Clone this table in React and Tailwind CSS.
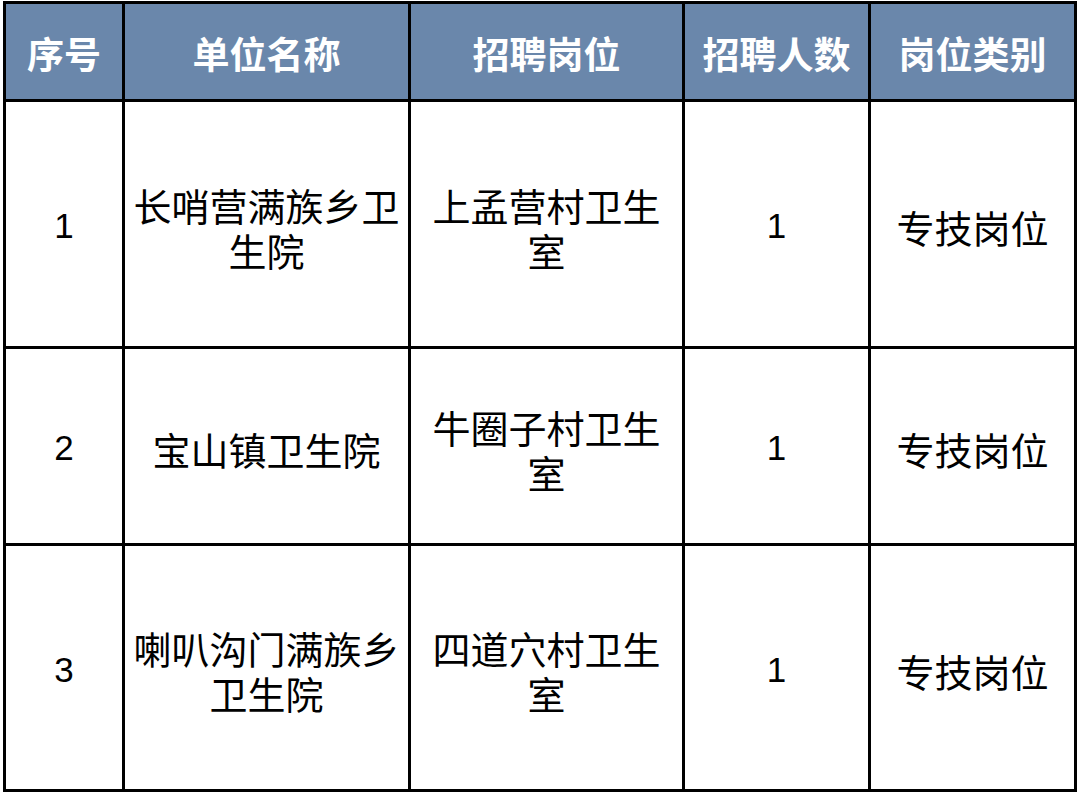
const rows = [
  { no: '1', unit: '长哨营满族乡卫生院', post: '上孟营村卫生室', count: '1', kind: '专技岗位', h: 'h-[244px]' },
  { no: '2', unit: '宝山镇卫生院', post: '牛圈子村卫生室', count: '1', kind: '专技岗位', h: 'h-[194px]' },
  { no: '3', unit: '喇叭沟门满族乡卫生院', post: '四道穴村卫生室', count: '1', kind: '专技岗位', h: 'h-[243px]' },
];

const headers = ['序号', '单位名称', '招聘岗位', '招聘人数', '岗位类别'];

const cjk = "font-['Noto_Sans_CJK_SC',sans-serif]";
const num = "font-['Liberation_Sans',Arial,sans-serif]";

export default function App() {
  return (
    <div className="w-[1080px] h-[795px] bg-white overflow-hidden">
      <div className="ml-[3px] mt-[1px] w-[1074px] grid grid-cols-[116px_283px_271px_183px_203px] gap-[3px] p-[3px] bg-black">
        {headers.map((t) => (
          <div
            key={t}
            className={`h-[95px] bg-[#6a87ab] text-white font-bold text-[37px] leading-[45px] flex items-center justify-center pt-[3px] ${cjk}`}
          >
            {t}
          </div>
        ))}
        {rows.map((r) => (
          <Row key={r.no} r={r} />
        ))}
      </div>
    </div>
  );
}

function Row({ r }) {
  const cell = `${r.h} bg-white text-black flex items-center justify-center text-center px-[4px] pt-[5px]`;
  return (
    <>
      <div className={`${cell} ${num} text-[35px]`}>{r.no}</div>
      <div className={`${cell} ${cjk} text-[38px] leading-[45px]`}>{r.unit}</div>
      <div className={`${cell} ${cjk} text-[38px] leading-[45px]`}>{r.post}</div>
      <div className={`${cell} ${num} text-[35px]`}>{r.count}</div>
      <div className={`${cell} ${cjk} text-[38px] leading-[45px]`}>{r.kind}</div>
    </>
  );
}
